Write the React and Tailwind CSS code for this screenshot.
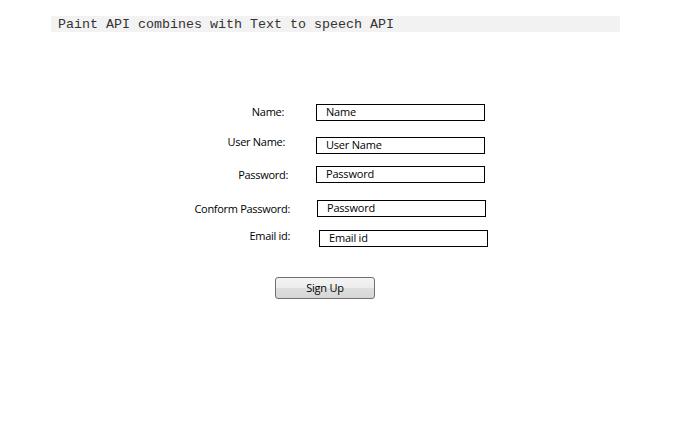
export default function App() {
  const label = "text-[11px] leading-[15px] tracking-[-0.3px] text-right text-black shrink-0";
  const box =
    "h-[17px] w-[169px] border border-black bg-white pl-[9px] text-[11px] leading-[13px] tracking-[-0.2px] text-black shrink-0";
  return (
    <div
      className="w-[674px] h-[421px] bg-white overflow-hidden"
      style={{ fontFamily: '"Open Sans", "Noto Sans", sans-serif' }}
    >
      <div className="pt-[16px] pl-[51px]">
        <div
          className="w-[569px] h-[16px] bg-[#f2f2f2] pl-[7px] text-[13.33px] leading-[18px] text-[#333]"
          style={{ fontFamily: '"Liberation Mono", monospace' }}
        >
          Paint API combines with Text to speech API
        </div>
      </div>

      <div className="flex flex-col mt-[72px]">
        <div className="flex items-start">
          <div className={`${label} w-[284px] mt-[0px]`}>Name:</div>
          <div className={`${box} ml-[32px]`}>Name</div>
        </div>
        <div className="flex items-start mt-[13px]">
          <div className={`${label} w-[285px]`}>User Name:</div>
          <div className={`${box} ml-[31px] mt-[3px]`}>User Name</div>
        </div>
        <div className="flex items-start mt-[12px]">
          <div className={`${label} w-[288px] mt-[1px]`}>Password:</div>
          <div className={`${box} ml-[28px]`}>Password</div>
        </div>
        <div className="flex items-start mt-[17px]">
          <div className={`${label} w-[290px] mt-[1px]`}>Conform Password:</div>
          <div className={`${box} ml-[27px]`}>Password</div>
        </div>
        <div className="flex items-start mt-[11px]">
          <div className={`${label} w-[290px]`}>Email id:</div>
          <div className={`${box} ml-[29px] mt-[2px]`}>Email id</div>
        </div>
        <div className="mt-[30px] ml-[275px]">
          <div className="w-[100px] h-[22px] rounded-[3px] border border-[#707070] bg-[linear-gradient(to_bottom,#f4f4f4_0%,#ececec_50%,#dedede_51%,#d6d6d6_100%)] text-[11px] leading-[19px] tracking-[-0.2px] text-center text-black">
            Sign Up
          </div>
        </div>
      </div>
    </div>
  );
}
